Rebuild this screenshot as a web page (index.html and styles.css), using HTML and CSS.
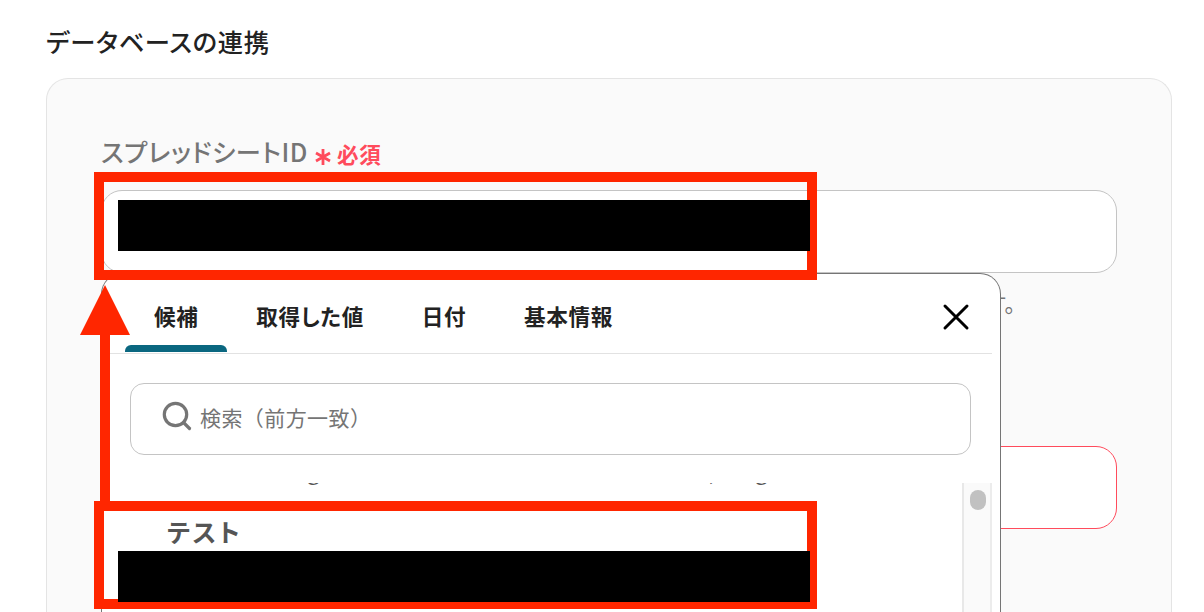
FILE: index.html
```
<!DOCTYPE html>
<html lang="ja">

<head>
    <meta charset="UTF-8">
    <meta name="viewport" content="width=device-width, initial-scale=1.0">
    <title>データベースの連携</title>
    <link rel="stylesheet" href="styles.css">
</head>

<body>
    <h1 class="title">データベースの連携</h1>

    <div class="panel">
        <div class="label">
            <span class="label-text">スプレッドシートID</span>
            <svg class="asterisk" width="16" height="18" viewBox="0 0 16 18">
                <path d="M8 1v16M1 5l14 8M15 5L1 13" />
            </svg>
            <span class="required">必須</span>
        </div>

        <div class="field">
            <div class="input"></div>

            <div class="popup">
                <div class="tabs">
                    <div class="tab active">候補</div>
                    <div class="tab">取得した値</div>
                    <div class="tab">日付</div>
                    <div class="tab">基本情報</div>
                    <svg class="close" width="28" height="28" viewBox="0 0 28 28">
                        <path d="M3 3l22 22M25 3L3 25" />
                    </svg>
                </div>

                <div class="search">
                    <svg width="30" height="30" viewBox="0 0 30 30">
                        <circle cx="13.5" cy="13.5" r="11.2" />
                        <path d="M21.5 21.5l6 6" />
                    </svg>
                    <span>検索（前方一致）</span>
                </div>

                <div class="list">
                    <div class="items">
                        <div class="item-id"><span>g</span><span>,</span><span>g</span></div>
                        <div class="item-name">テスト</div>
                    </div>
                    <div class="scrollbar">
                        <div class="thumb"></div>
                    </div>
                </div>
            </div>
        </div>

        <p class="hint">す。</p>
        <div class="input error"></div>
    </div>

    <!-- 説明用の枠と矢印 -->
    <div class="frame frame-top"></div>
    <div class="frame frame-bottom"></div>
    <div class="mask mask-top"></div>
    <div class="mask mask-bottom"></div>
    <svg class="arrow" width="50" height="217" viewBox="0 0 50 217">
        <path d="M25 0l25 50H30v167H20V50H0z" />
    </svg>
</body>

</html>
```
FILE: styles.css
```
* {
    box-sizing: border-box;
}

body {
    position: relative;
    height: 612px;
    margin: 0;
    overflow: hidden;
    padding: 23px 32px 0 46px;
    background-color: #fff;
    color: #222;
    font-family: "Noto Sans CJK JP", sans-serif;
    font-feature-settings: "palt";
    letter-spacing: 0.04em;
}

.title {
    height: 36px;
    margin: 0 0 19px;
    font-size: 25.3px;
    font-weight: 500;
    line-height: 36px;
}

.panel {
    height: 534px;
    padding: 56px 54px 0;
    border: 1px solid #e4e4e4;
    border-bottom: none;
    border-radius: 22px 22px 0 0;
    background-color: #fafafa;
}

.label {
    display: flex;
    align-items: center;
    height: 36px;
    margin-bottom: 19px;
    color: #757575;
    font-size: 25.2px;
    white-space: nowrap;
}

.label-text {
    margin-top: -4px;
    font-weight: 500;
}

.asterisk {
    margin: 8px 6px 0 7px;
    fill: none;
    stroke: #ff4b5c;
    stroke-width: 2.8;
}

.required {
    margin-top: 1px;
    color: #ff4b5c;
    font-size: 21.5px;
    font-weight: 700;
}

.field {
    position: relative;
}

.input {
    height: 83px;
    border: 1px solid #c4c4c4;
    border-radius: 21px;
    background-color: #fff;
}

.input.error {
    border-color: #ff4b5c;
}

.hint {
    height: 36px;
    margin: 11px 0 126px;
    padding-left: 885px;
    color: #757575;
    font-size: 22px;
    line-height: 36px;
}

/* 候補のポップアップ */
.popup {
    position: absolute;
    top: 83px;
    left: 0;
    width: 900px;
    height: 339px;
    border: 1px solid #757575;
    border-bottom: none;
    border-radius: 21px 21px 0 0;
    background-color: #fff;
}

.tabs {
    display: flex;
    height: 80px;
    margin: 0 8px 29px 0;
    padding-left: 23px;
    border-bottom: 1px solid #e2e2e2;
}

.tab {
    position: relative;
    height: 78px;
    padding: 0 28.8px 0 29px;
    font-size: 21.6px;
    font-weight: 700;
    line-height: 84px;
    white-space: nowrap;
}

.tab.active::after {
    content: "";
    position: absolute;
    left: 0;
    bottom: 0;
    width: 100%;
    height: 7px;
    border-radius: 6px 6px 0 0;
    background-color: #0a6780;
}

.close {
    margin: 29px 22px 0 auto;
    stroke: #000;
    stroke-width: 3;
    stroke-linecap: round;
}

.search {
    display: flex;
    align-items: center;
    gap: 8px;
    height: 72px;
    margin: 0 29px 28px 28px;
    padding: 0 0 4px 31px;
    border: 1px solid #c4c4c4;
    border-radius: 14px;
    color: #757575;
    font-feature-settings: normal;
    font-size: 21px;
    letter-spacing: 0.02em;
}

.search svg {
    margin-top: -2px;
    fill: none;
    stroke: #757575;
    stroke-width: 3.2;
    stroke-linecap: round;
}

.list {
    display: flex;
    height: 129px;
    margin-right: 8px;
    overflow: hidden;
}

.items {
    flex: 1;
    padding-left: 65px;
}

.item-id {
    display: grid;
    grid-template-columns: 402px 46px 1fr;
    height: 30px;
    margin-top: -28px;
    padding-left: 140px;
    color: #555;
    font-size: 22px;
    line-height: 30px;
}

.item-name {
    margin-top: 28px;
    color: #555;
    font-size: 25px;
    font-weight: 700;
    letter-spacing: 0.1em;
    line-height: 36px;
}

.scrollbar {
    width: 30px;
    padding: 7px 6px 0;
    border-left: 2px solid #e8e8e8;
    border-right: 2px solid #ececec;
    background-color: #fafafa;
}

.thumb {
    width: 16px;
    height: 20px;
    border-radius: 8px;
    background-color: #c1c1c1;
}

.frame {
    position: absolute;
    left: 94px;
    width: 723px;
    height: 108px;
    border: 10px solid #ff2600;
}

.frame-top {
    top: 172px;
}

.frame-bottom {
    top: 501px;
}

.mask {
    position: absolute;
    left: 118px;
    width: 692px;
    height: 51px;
    background-color: #000;
}

.mask-top {
    top: 200px;
}

.mask-bottom {
    top: 551px;
}

.arrow {
    position: absolute;
    top: 285px;
    left: 80px;
    fill: #ff2600;
}
```
